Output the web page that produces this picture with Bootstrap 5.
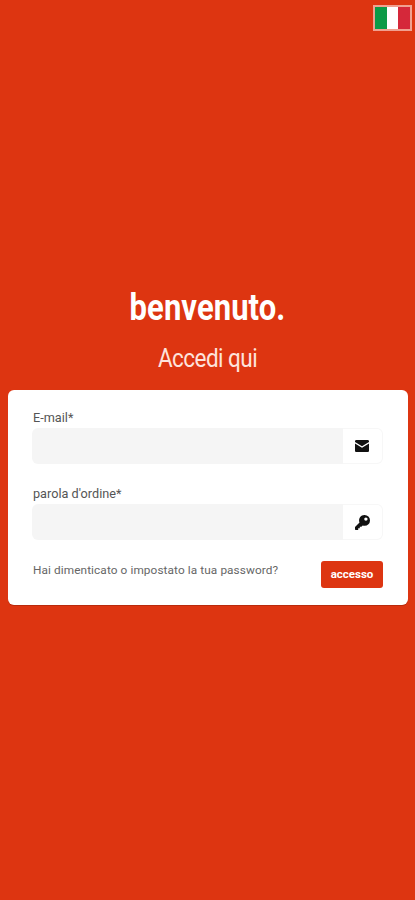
<!doctype html>
<html lang="it">
<head>
<meta charset="utf-8">
<title>Accedi</title>
<link href="https://cdn.jsdelivr.net/npm/bootstrap@5.3.0/dist/css/bootstrap.min.css" rel="stylesheet">
<style>
html,body{height:900px;overflow:hidden}
body{background:#dd3511;font-family:Roboto,"Liberation Sans",sans-serif;color:#333}
.flag-wrap{padding:5px 3px 0 0;height:288px}
.flag-box{width:39px;height:26px;border:2px solid #f0a090;background:#fff;display:flex}
.flag-box i{flex:1;display:block}
.f-g{background:#0b9a47}.f-w{background:#fff}.f-r{background:#d5283a}
.welcome-h{font-size:36px;font-weight:700;color:#fff;letter-spacing:.1px;line-height:40px;margin:0;transform:scaleX(.86)}
.welcome-s{font-size:25px;font-weight:400;color:#fde3dc;letter-spacing:-.6px;line-height:30px;margin:16px 0 16px;transform:scaleX(.9)}
.login-panel{margin:0 7px 0 8px;height:215px;border-radius:6px;border:0;padding:20px 25px 0 24px;box-shadow:0 1px 0 #b92a0c}
.field-lab{font-size:12.7px;line-height:16px;margin:0 0 2px;padding-left:1px;color:#555}
.field-row .form-control{min-height:0;background:#f5f5f5;border:0;border-radius:6px 0 0 6px}
.field-row .input-group-text{width:41px;background:#fff;border:1px solid #f7f7f7;border-left:0;border-radius:0 6px 6px 0;justify-content:center;padding:0}
.row-mail{height:35px;margin-bottom:23px}
.row-pass{height:36px;margin-bottom:21px}
.forgot{font-size:11.8px;color:#666;letter-spacing:.1px;text-decoration:none;margin:-8px 0 0 1px}
.btn-enter{width:62px;height:27px;padding:0;background:#dd3511;color:#fff;border:0;border-radius:3px;font-size:11.5px;font-weight:700}
.btn-enter:hover{background:#c62f0f;color:#fff}
</style>
</head>
<body>
<div class="d-flex justify-content-end flag-wrap">
  <div class="flag-box" role="img" aria-label="Italiano"><i class="f-g"></i><i class="f-w"></i><i class="f-r"></i></div>
</div>
<div class="text-center">
  <h1 class="welcome-h">benvenuto.</h1>
  <h2 class="welcome-s">Accedi qui</h2>
</div>
<div class="card login-panel">
  <form>
    <label class="form-label field-lab d-block" for="em">E-mail*</label>
    <div class="input-group field-row row-mail">
      <input id="em" type="email" class="form-control">
      <span class="input-group-text">
        <svg width="14" height="12" viewBox="0 0 14 12"><path fill="#111" d="M1.3 0h11.4C13.4 0 14 .6 14 1.300v.7L7 6.200 0 2v-.7C0 .6.6 0 1.300 0zM0 3.600l7 4.200 7-4.200v7.100c0 .7-.6 1.300-1.300 1.300H1.300C.6 12 0 11.400 0 10.700z"/></svg>
      </span>
    </div>
    <label class="form-label field-lab d-block" for="pw">parola d'ordine*</label>
    <div class="input-group field-row row-pass">
      <input id="pw" type="password" class="form-control">
      <span class="input-group-text">
        <svg width="15" height="15" viewBox="0 0 15 15"><path fill="#111" fill-rule="evenodd" d="M9.600 0a5.400 5.400 0 0 1 0 10.800c-.7 0-1.300-.1-1.900-.4L6.400 11.700H4.800v1.600H3.200V15H.6L0 14.400v-2.300l4.500-4.600a5.400 5.400 0 0 1 5.100-7.500zm1.300 2.400a1.700 1.700 0 1 0 0 3.400 1.700 1.700 0 0 0 0-3.400z"/></svg>
      </span>
    </div>
    <div class="d-flex justify-content-between align-items-center">
      <a href="#" class="forgot">Hai dimenticato o impostato la tua password?</a>
      <button type="button" class="btn btn-enter">accesso</button>
    </div>
  </form>
</div>
</body>
</html>
